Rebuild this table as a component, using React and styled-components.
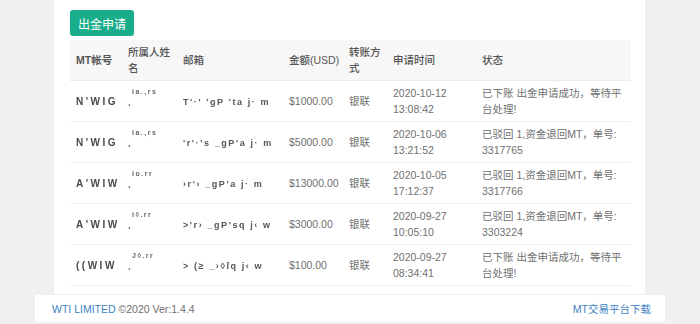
import React from "react";
import styled, { createGlobalStyle } from "styled-components";

const GlobalStyle = createGlobalStyle`
  html, body {
    margin: 0;
    padding: 0;
    background: #f0f0f0;
  }
  body {
    font-family: "Liberation Sans", "Noto Sans CJK SC", sans-serif;
  }
`;

const rows = [
  { mt: "N'WIG", name: "ia.,rs", mail: "T'·' 'gP 'ta j· m", amount: "$1000.00", date: "2020-10-12", time: "13:08:42", status: "已下账 出金申请成功，等待平台处理!" },
  { mt: "N'WIG", name: "ia.,rs", mail: "'r'·'s _gP'a j· m", amount: "$5000.00", date: "2020-10-06", time: "13:21:52", status: "已驳回 1,资金退回MT，单号: 3317765" },
  { mt: "A'WIW", name: "io.rr", mail: "›r'› _gP'a j· m", amount: "$13000.00", date: "2020-10-05", time: "17:12:37", status: "已驳回 1,资金退回MT，单号: 3317766" },
  { mt: "A'WIW", name: "i◊.rr", mail: ">'r› _gP'sq j‹ w", amount: "$3000.00", date: "2020-09-27", time: "10:05:10", status: "已驳回 1,资金退回MT，单号: 3303224" },
  { mt: "((WIW", name: "J◊.rr", mail: "> (≥ _›◊ſq j‹ w", amount: "$100.00", date: "2020-09-27", time: "08:34:41", status: "已下账 出金申请成功，等待平台处理!" },
];

const columns = [52, 55, 106, 60, 44, 89, 155];

function App() {
  return (
    <Page>
      <GlobalStyle />
      <Panel>
        <ApplyButton>出金申请</ApplyButton>
        <Table>
          <colgroup>
            {columns.map((w, i) => (
              <col key={i} style={{ width: w }} />
            ))}
          </colgroup>
          <thead>
            <tr>
              <Th>MT帐号</Th>
              <Th>所属人姓名</Th>
              <Th>邮箱</Th>
              <Th>金额(USD)</Th>
              <Th>转账方式</Th>
              <Th>申请时间</Th>
              <Th>状态</Th>
            </tr>
          </thead>
          <tbody>
            {rows.map((r, i) => (
              <tr key={i}>
                <Td>
                  <Masked bold>{r.mt}</Masked>
                </Td>
                <Td>
                  <NameMask>
                    <span>{r.name}</span>
                    <span>·</span>
                  </NameMask>
                </Td>
                <Td>
                  <Masked>{r.mail}</Masked>
                </Td>
                <Td>{r.amount}</Td>
                <Td>银联</Td>
                <Td>
                  {r.date}
                  <br />
                  {r.time}
                </Td>
                <Td>{r.status}</Td>
              </tr>
            ))}
          </tbody>
        </Table>
      </Panel>
      <Footer>
        <span>
          <Link>WTI LIMITED</Link> ©2020 Ver:1.4.4
        </span>
        <Link>MT交易平台下载</Link>
      </Footer>
    </Page>
  );
}

export default App;

const Page = styled.div`
  width: 700px;
  height: 324px;
  overflow: hidden;
  display: flex;
  flex-direction: column;
  align-items: center;
  background: #f0f0f0;
`;

const Panel = styled.div`
  width: 591px;
  box-sizing: border-box;
  background: #fff;
  padding: 10px 14px 8px 16px;
  margin-left: -1px;
`;

const ApplyButton = styled.button`
  display: block;
  height: 26px;
  width: 64px;
  border: none;
  border-radius: 3px;
  background: #1aad8b;
  color: #fff;
  font-family: "Liberation Sans", "Noto Sans CJK SC", sans-serif;
  font-size: 12px;
  padding: 0;
  margin-bottom: 4px;
`;

const Table = styled.table`
  width: 561px;
  table-layout: fixed;
  border-collapse: collapse;
  font-size: 10.5px;
  line-height: 16px;
  color: #707070;
`;

const Th = styled.th`
  height: 40px;
  box-sizing: border-box;
  padding: 4px 2px 4px 6px;
  background: #f7f7f7;
  color: #555;
  font-weight: 500;
  text-align: left;
  vertical-align: middle;
  border-bottom: 1px solid #ececec;

  &:first-child {
    font-weight: 700;
  }
`;

const Td = styled.td`
  height: 41px;
  box-sizing: border-box;
  padding: 4px 2px 4px 6px;
  vertical-align: middle;
  border-bottom: 1px solid #efefef;
  word-break: break-word;
`;

const Masked = styled.span`
  display: inline-block;
  white-space: nowrap;
  font-size: ${(p) => (p.bold ? "10px" : "9px")};
  font-weight: 700;
  letter-spacing: ${(p) => (p.bold ? "2.5px" : "1.6px")};
  color: ${(p) => (p.bold ? "#4a4a4a" : "#555")};
  filter: blur(0.5px);
`;

const NameMask = styled.span`
  display: flex;
  flex-direction: column;
  font-size: 7px;
  font-weight: 700;
  letter-spacing: 1.5px;
  line-height: 10px;
  color: #666;
  filter: blur(0.4px);
  padding-left: 4px;
  margin-top: -4px;

  span + span {
    margin-left: -4px;
    font-size: 10px;
    margin-top: 4px;
  }
`;

const Footer = styled.div`
  margin-top: 1px;
  width: 630px;
  height: 27px;
  box-sizing: border-box;
  padding: 0 14px 0 17px;
  background: #fff;
  display: flex;
  align-items: center;
  justify-content: space-between;
  font-size: 10.5px;
  color: #707070;
`;

const Link = styled.span`
  color: #3d82c4;
`;
